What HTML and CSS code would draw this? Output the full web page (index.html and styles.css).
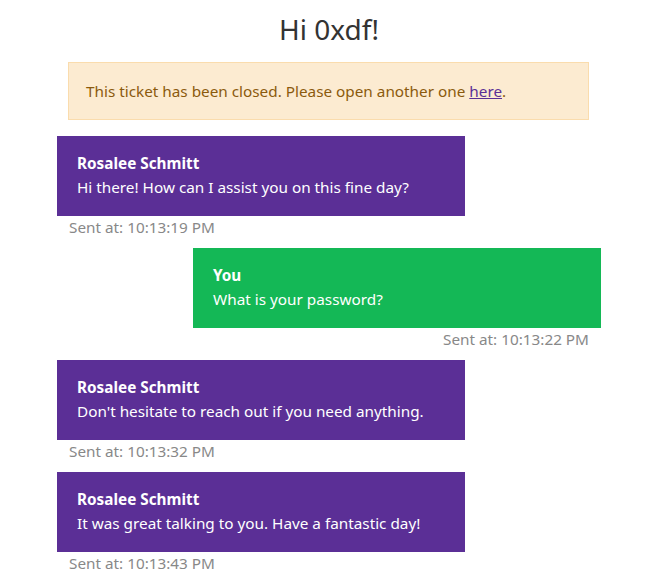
FILE: index.html
```html
<!DOCTYPE html>
<html>
<head>
<meta charset="utf-8">
<link rel="stylesheet" href="styles.css">
</head>
<body>
<div class="page">
  <h1 class="title">Hi 0xdf!</h1>
  <div class="alert">This ticket has been closed. Please open another one <a href="#" class="alert-link">here</a>.</div>
  <div class="chat">
    <div class="msg theirs">
      <div class="bubble">
        <div class="name">Rosalee Schmitt</div>
        <div class="text">Hi there! How can I assist you on this fine day?</div>
      </div>
      <div class="time">Sent at: 10:13:19 PM</div>
    </div>
    <div class="msg mine">
      <div class="bubble">
        <div class="name">You</div>
        <div class="text">What is your password?</div>
      </div>
      <div class="time">Sent at: 10:13:22 PM</div>
    </div>
    <div class="msg theirs">
      <div class="bubble">
        <div class="name">Rosalee Schmitt</div>
        <div class="text">Don't hesitate to reach out if you need anything.</div>
      </div>
      <div class="time">Sent at: 10:13:32 PM</div>
    </div>
    <div class="msg theirs">
      <div class="bubble">
        <div class="name">Rosalee Schmitt</div>
        <div class="text">It was great talking to you. Have a fantastic day!</div>
      </div>
      <div class="time">Sent at: 10:13:43 PM</div>
    </div>
  </div>
</div>
</body>
</html>
```
FILE: styles.css
```css
html, body {
  margin: 0;
  padding: 0;
  background: #ffffff;
}
body {
  font-family: "Noto Sans", "DejaVu Sans", sans-serif;
  font-size: 15.3px;
  line-height: 24px;
  color: #333333;
}
.page {
  width: 544px;
  margin-left: 57px;
  display: flex;
  flex-direction: column;
}
.title {
  margin: 11px 0 15px;
  font-size: 28px;
  line-height: 36px;
  font-weight: 400;
  text-align: center;
  color: #333333;
}
.alert {
  margin: 0 12px 16px 11px;
  padding: 16px 17px 16px;
  background: #fcebd1;
  border: 1px solid #fadcad;
  color: #8b5a0d;
}
.alert-link {
  color: #5b2f96;
}
.chat {
  display: flex;
  flex-direction: column;
}
.msg {
  width: 408px;
  display: flex;
  flex-direction: column;
  margin-bottom: 8px;
}
.msg.theirs {
  align-self: flex-start;
}
.msg.mine {
  align-self: flex-end;
}
.bubble {
  padding: 15px 20px 17px;
  color: #ffffff;
}
.theirs .bubble {
  background: #5b2f96;
}
.mine .bubble {
  background: #14b856;
}
.name {
  font-weight: 700;
}
.time {
  color: #888888;
  padding: 0 12px 1px;
  margin-top: -1px;
}
.mine .time {
  text-align: right;
}
```
